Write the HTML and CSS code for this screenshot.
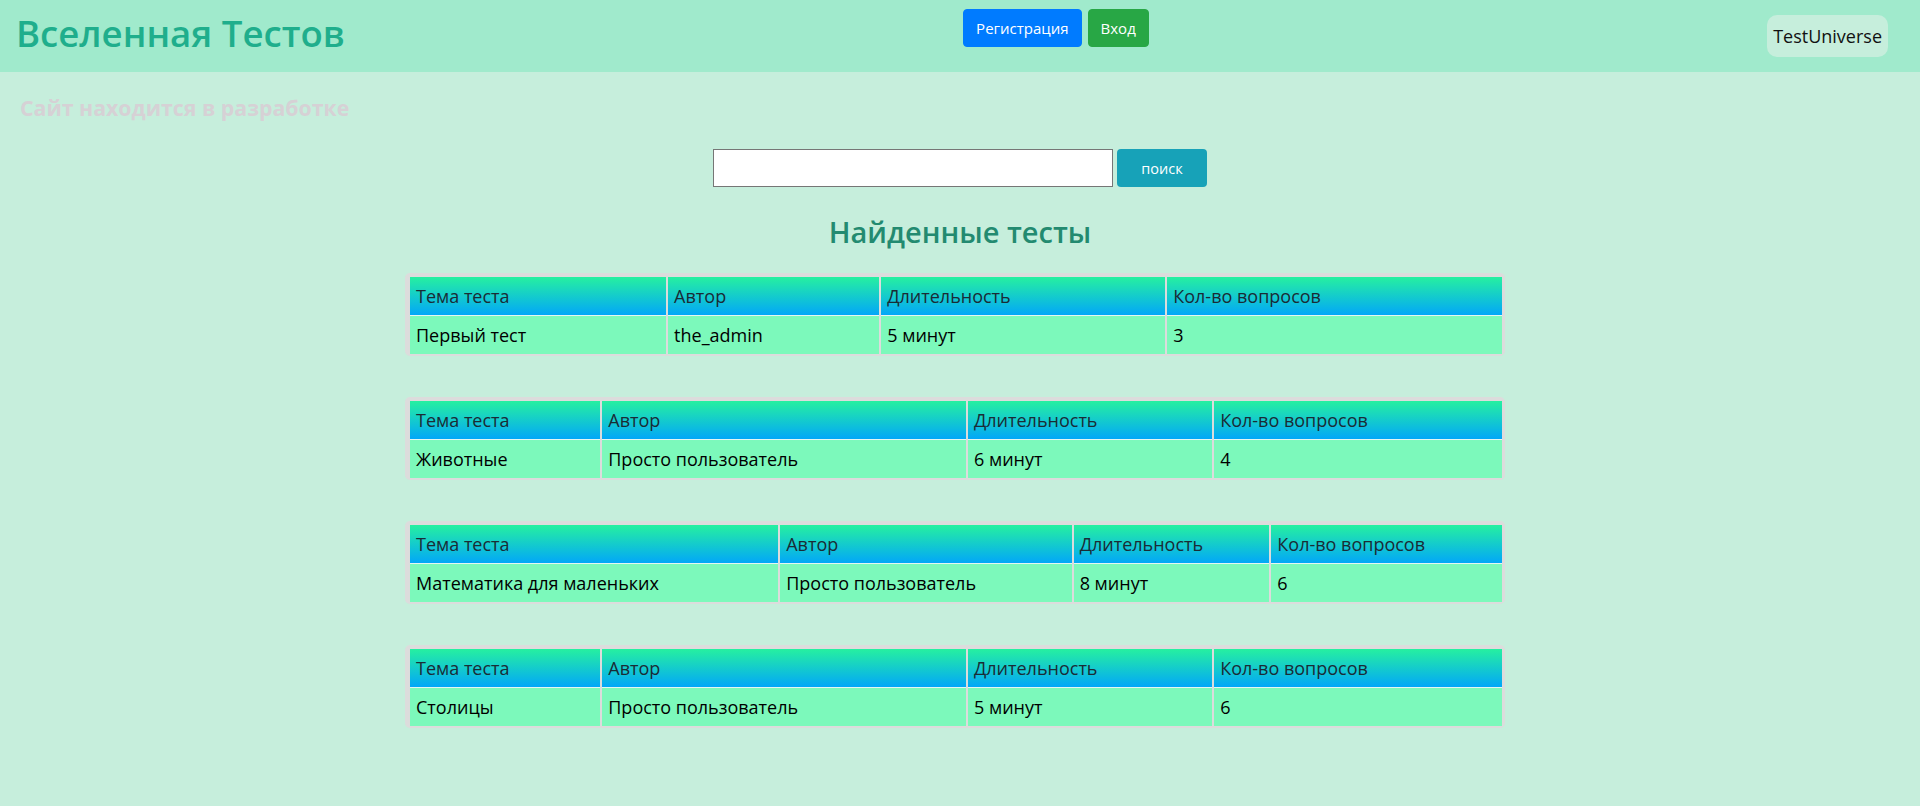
FILE: index.html
```html
<!DOCTYPE html>
<html lang="ru">
<head>
<meta charset="utf-8">
<title>Вселенная Тестов</title>
<link rel="stylesheet" href="styles.css">
</head>
<body>
<header class="topbar">
  <h1 class="brand">Вселенная Тестов</h1>
  <div class="auth">
    <button class="btn btn-blue">Регистрация</button>
    <button class="btn btn-green">Вход</button>
  </div>
  <div class="site-tag">TestUniverse</div>
</header>
<main class="page">
  <p class="notice">Сайт находится в разработке</p>
  <form class="search">
    <input class="search-input" type="text">
    <button class="search-btn" type="button">поиск</button>
  </form>
  <h2 class="found-title">Найденные тесты</h2>
  <div class="results">
    <div class="result">
      <table class="result-table">
        <tr><th>Тема теста</th><th>Автор</th><th>Длительность</th><th>Кол-во вопросов</th></tr>
        <tr><td>Первый тест</td><td>the_admin</td><td>5 минут</td><td>3</td></tr>
      </table>
    </div>
    <div class="result">
      <table class="result-table">
        <tr><th>Тема теста</th><th>Автор</th><th>Длительность</th><th>Кол-во вопросов</th></tr>
        <tr><td>Животные</td><td>Просто пользователь</td><td>6 минут</td><td>4</td></tr>
      </table>
    </div>
    <div class="result">
      <table class="result-table">
        <tr><th>Тема теста</th><th>Автор</th><th>Длительность</th><th>Кол-во вопросов</th></tr>
        <tr><td>Математика для маленьких</td><td>Просто пользователь</td><td>8 минут</td><td>6</td></tr>
      </table>
    </div>
    <div class="result">
      <table class="result-table">
        <tr><th>Тема теста</th><th>Автор</th><th>Длительность</th><th>Кол-во вопросов</th></tr>
        <tr><td>Столицы</td><td>Просто пользователь</td><td>5 минут</td><td>6</td></tr>
      </table>
    </div>
  </div>
</main>
</body>
</html>
```

FILE: styles.css
```css
html, body {
  margin: 0;
  padding: 0;
}
body {
  background: #c6eedc;
  font-family: "Open Sans", "Noto Sans", sans-serif;
  min-height: 806px;
}
.topbar {
  height: 72px;
  background: #a0eacc;
  display: flex;
  justify-content: space-between;
  align-items: flex-start;
  padding: 0 32px 0 16px;
  box-sizing: border-box;
}
.brand {
  margin: 9px 0 0 0;
  font-size: 36.6px;
  line-height: 48px;
  font-weight: 600;
  color: #1fae8c;
}
.auth {
  display: flex;
  gap: 6px;
  margin-top: 9px;
}
.btn {
  font-family: inherit;
  font-size: 15px;
  line-height: 24px;
  padding: 6px 12px;
  border: 1px solid transparent;
  border-radius: 4px;
  color: #fff;
}
.btn-blue { background: #007bff; border-color: #007bff; }
.btn-green { background: #28a745; border-color: #28a745; }
.site-tag {
  margin-top: 15px;
  background: #c6eedc;
  border-radius: 10px;
  padding: 7px 6px;
  font-size: 18px;
  line-height: 28px;
  color: #111;
}
.notice {
  margin: 21px 0 0 20px;
  font-size: 21.3px;
  line-height: 30px;
  font-weight: 700;
  color: #d6d1d5;
}
.search {
  display: flex;
  justify-content: center;
  gap: 4px;
  margin-top: 26px;
}
.search-input {
  width: 400px;
  height: 38px;
  box-sizing: border-box;
  border: 1px solid #767676;
  background: #fff;
  padding: 0 4px;
  margin: 0;
}
.search-btn {
  width: 90px;
  height: 38px;
  border: none;
  border-radius: 4px;
  background: #17a2b8;
  color: #fff;
  font-family: inherit;
  font-size: 14.5px;
}
.found-title {
  margin: 25px 0 0 0;
  text-align: center;
  font-size: 29px;
  line-height: 40px;
  font-weight: 600;
  color: #238a70;
}
.results {
  width: 1110px;
  margin: 21px auto 0;
}
.result {
  width: 1100px;
  box-sizing: border-box;
  background: #dcdcdc;
  border-radius: 5px;
  padding: 4px 1px 2px 3px;
  margin-bottom: 41px;
}
.result-table {
  width: 100%;
  border-collapse: separate;
  border-spacing: 2px 0;
  font-size: 18px;
  line-height: 28px;
}
.result-table th {
  text-align: left;
  font-weight: 400;
  color: #1a2b35;
  padding: 5px 6px;
  background: linear-gradient(to bottom, #26f0a0, #02a7f8);
  border-bottom: 1px solid #e4f6f2;
}
.result-table td {
  padding: 5px 6px;
  background: #7cf9bb;
  color: #000;
}
```
